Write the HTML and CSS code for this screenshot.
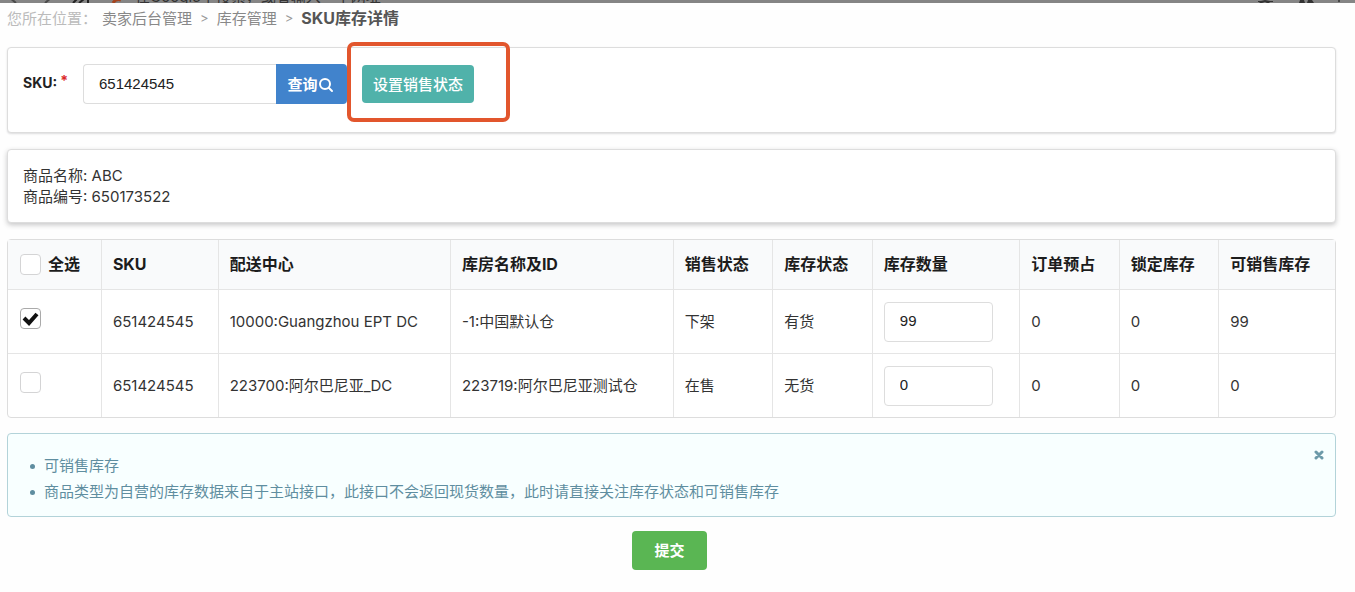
FILE: index.html
```html
<!DOCTYPE html>
<html lang="zh-CN">
<head>
<meta charset="utf-8">
<title>SKU库存详情</title>
<link rel="stylesheet" href="styles.css">
</head>
<body>
<div class="topstrip">
  <svg class="topstrip-nav" width="135" height="14" viewBox="0 0 135 14" fill="none" stroke="#4a4a4a" stroke-width="2"><path d="M9 8l7 6M45 14l7-6"/><path d="M73 14l6-6M84 10l-5 4M88 14V9" stroke="#222"/><path d="M113 14q3-5 8-3" stroke="#a5441f" stroke-width="3"/></svg>
  <span class="topstrip-hint">在Google中搜索，或者输入一个网址</span>
  <svg class="topstrip-tools" width="105" height="14" viewBox="0 0 105 14" fill="#333"><path d="M8 12h3l4-1 5 1h3v1h-4l1 1h-3l-2-1-3 1h-3l1-1h-2z"/><path d="M49 14l1-3h4l1 3zM57 14l1-3h4l2 3z"/><circle cx="89" cy="12" r="1"/></svg>
</div>
<main class="page">
  <nav class="crumbs" aria-label="位置">
    <span class="crumb-label">您所在位置：</span>
    <a class="crumb" href="#">卖家后台管理</a>
    <span class="crumb-sep">&gt;</span>
    <a class="crumb" href="#">库存管理</a>
    <span class="crumb-sep">&gt;</span>
    <span class="crumb-current">SKU库存详情</span>
  </nav>

  <form class="panel search">
    <label class="search-label" for="sku">SKU:<span class="required">*</span></label>
    <div class="search-group">
      <input class="field search-field" id="sku" type="text" value="651424545">
      <button class="btn btn-query" type="button">查询<svg width="15" height="15" viewBox="0 0 15 15" fill="none" stroke="currentColor" stroke-width="2" stroke-linecap="round"><circle cx="6" cy="6" r="5"/><path d="M10 10l3 3"/></svg></button>
    </div>
    <div class="highlight"><button class="btn btn-status" type="button">设置销售状态</button></div>
  </form>

  <section class="panel product">
    <div>商品名称: ABC</div>
    <div>商品编号: 650173522</div>
  </section>

  <table class="stock">
    <colgroup>
      <col class="c-check"><col class="c-sku"><col class="c-center"><col class="c-house"><col class="c-state"><col class="c-state"><col class="c-count"><col class="c-state"><col class="c-state"><col class="c-sku">
    </colgroup>
    <thead>
      <tr>
        <th><label class="check-all"><input class="check" type="checkbox">全选</label></th>
        <th>SKU</th><th>配送中心</th><th>库房名称及ID</th><th>销售状态</th><th>库存状态</th><th>库存数量</th><th>订单预占</th><th>锁定库存</th><th>可销售库存</th>
      </tr>
    </thead>
    <tbody>
      <tr>
        <td class="check-cell"><input class="check" type="checkbox" checked aria-label="选择 10000"></td>
        <td>651424545</td><td>10000:Guangzhou EPT DC</td><td>-1:中国默认仓</td><td>下架</td><td>有货</td>
        <td><input class="field count" type="text" value="99" aria-label="库存数量"></td>
        <td>0</td><td>0</td><td>99</td>
      </tr>
      <tr>
        <td class="check-cell"><input class="check" type="checkbox" aria-label="选择 223700"></td>
        <td>651424545</td><td>223700:阿尔巴尼亚_DC</td><td>223719:阿尔巴尼亚测试仓</td><td>在售</td><td>无货</td>
        <td><input class="field count" type="text" value="0" aria-label="库存数量"></td>
        <td>0</td><td>0</td><td>0</td>
      </tr>
    </tbody>
  </table>

  <section class="notice">
    <ul class="notice-list">
      <li>可销售库存</li>
      <li>商品类型为自营的库存数据来自于主站接口，此接口不会返回现货数量，此时请直接关注库存状态和可销售库存</li>
    </ul>
    <button class="notice-close" type="button" aria-label="关闭"><svg width="10" height="10" viewBox="0 0 10 10" stroke="currentColor" stroke-width="3" stroke-linecap="round"><path d="M2 2l6 6M8 2l-6 6"/></svg></button>
  </section>

  <div class="actions"><button class="btn btn-submit" type="button">提交</button></div>
</main>
</body>
</html>
```
FILE: styles.css
```css
* { box-sizing: border-box; }

body {
  margin: 0;
  background: #fefefe;
  color: #333;
  font-family: Inter, "Noto Sans CJK SC", sans-serif;
  font-size: 15px;
  line-height: 21px;
}

input, button { font: inherit; margin: 0; }

.topstrip {
  display: flex;
  align-items: flex-end;
  height: 3px;
  overflow: hidden;
  background: #858585;
  color: #333;
}
.topstrip svg { flex: none; }
.topstrip-hint {
  flex: 1;
  line-height: 13px;
  white-space: nowrap;
}

.page { padding: 0 19px 16px 7px; }

.crumbs {
  display: flex;
  align-items: center;
  height: 31px;
  color: #999;
}
.crumb-label { color: #bbb; margin-right: 5px; }
.crumb { color: #888; text-decoration: none; }
.crumb-sep { margin: 0 8px; font-size: 13px; }
.crumb-current { color: #555; font-size: 16px; font-weight: 700; }

.panel {
  border: 1px solid #ddd;
  border-radius: 4px;
  background: #fff;
}

.search {
  display: flex;
  align-items: flex-start;
  height: 86px;
  margin: 13px 0 16px;
  padding: 16px 15px;
  box-shadow: 0 1px 2px rgba(34, 36, 38, .15);
}
.search-label {
  display: flex;
  width: 60px;
  padding-top: 8px;
  color: #222;
  font-size: 14px;
  font-weight: 700;
}
.required { margin-left: 3px; color: #db2828; line-height: 18px; }
.search-group { display: flex; }

.field {
  height: 40px;
  padding: 0 15px 2px;
  border: 1px solid #ddd;
  border-radius: 4px;
  background: #fff;
  color: #222;
  font-family: "Liberation Sans", sans-serif;
  outline: 0;
}
.search-field { width: 193px; border-right: 0; border-radius: 4px 0 0 4px; }

.btn {
  display: inline-flex;
  align-items: center;
  justify-content: center;
  border: 0;
  border-radius: 4px;
  color: #fff;
  font-weight: 700;
  white-space: nowrap;
}
.btn-query {
  gap: 1px;
  width: 71px;
  height: 40px;
  padding: 0 2px 0 0;
  border-radius: 0 4px 4px 0;
  background: #4183cc;
}
.btn-query svg { margin-top: 3px; }
.highlight {
  margin-top: -22px;
  padding: 19px 32px 15px 11px;
  border: 4px solid #e2562d;
  border-radius: 7px;
}
.btn-status { height: 38px; padding: 0 11px; background: #50b2aa; font-weight: 500; }

.product {
  margin-bottom: 16px;
  padding: 15px;
  box-shadow: 0 2px 5px rgba(34, 36, 38, .25);
}

.stock {
  width: 100%;
  table-layout: fixed;
  border: 1px solid #ddd;
  border-radius: 4px;
  border-collapse: separate;
  border-spacing: 0;
  background: #fff;
}
.c-check { width: 7%; }
.c-sku { width: 8.8%; }
.c-center { width: 17.5%; }
.c-house { width: 16.8%; }
.c-state { width: 7.5%; }
.c-count { width: 11.1%; }
.stock th, .stock td {
  padding: 0 11px;
  border-left: 1px solid #e5e5e5;
  text-align: left;
  white-space: nowrap;
}
.stock th:first-child, .stock td:first-child { padding-left: 12px; border-left: 0; }
.stock th {
  height: 49px;
  background: #f9fafb;
  color: #1c1c1c;
  font-size: 16px;
  font-weight: 700;
}
.stock td { height: 64px; border-top: 1px solid #e5e5e5; }
.check-all { display: flex; align-items: center; gap: 7px; }
.stock .check-cell { padding-top: 18px; vertical-align: top; }
.check {
  appearance: none;
  display: block;
  flex: none;
  width: 21px;
  height: 21px;
  margin: 0;
  border: 1px solid #d4d4d5;
  border-radius: 4px;
  background: #fff;
}
.check:checked {
  border-color: #aaa;
  background: #fff url("data:image/svg+xml,%3Csvg xmlns='http://www.w3.org/2000/svg' viewBox='0 0 19 19' fill='none' stroke='%23111' stroke-width='4'%3E%3Cpath d='M3 9l5 5 8-9'/%3E%3C/svg%3E") center / 19px 19px no-repeat;
}
.count { display: block; width: 109px; }

.notice {
  display: flex;
  align-items: flex-start;
  justify-content: space-between;
  margin-top: 15px;
  padding: 16px 11px 11px 0;
  border: 1px solid #b3d3d9;
  border-radius: 4px;
  background: #f8ffff;
  color: #5f8ea0;
}
.notice-list {
  margin: 3px 0 0;
  padding-left: 22px;
  line-height: 26px;
  list-style: none;
}
.notice-list li { display: flex; align-items: center; }
.notice-list li::before {
  content: "";
  flex: none;
  width: 5px;
  height: 5px;
  margin-right: 9px;
  border-radius: 50%;
  background: #5f8ea0;
}
.notice-close {
  display: flex;
  padding: 0;
  border: 0;
  background: none;
  color: #6d9aa9;
}

.actions { margin-top: 14px; padding-right: 4px; text-align: center; }
.btn-submit { height: 39px; padding: 0 22px; background: #5ab653; }
```
